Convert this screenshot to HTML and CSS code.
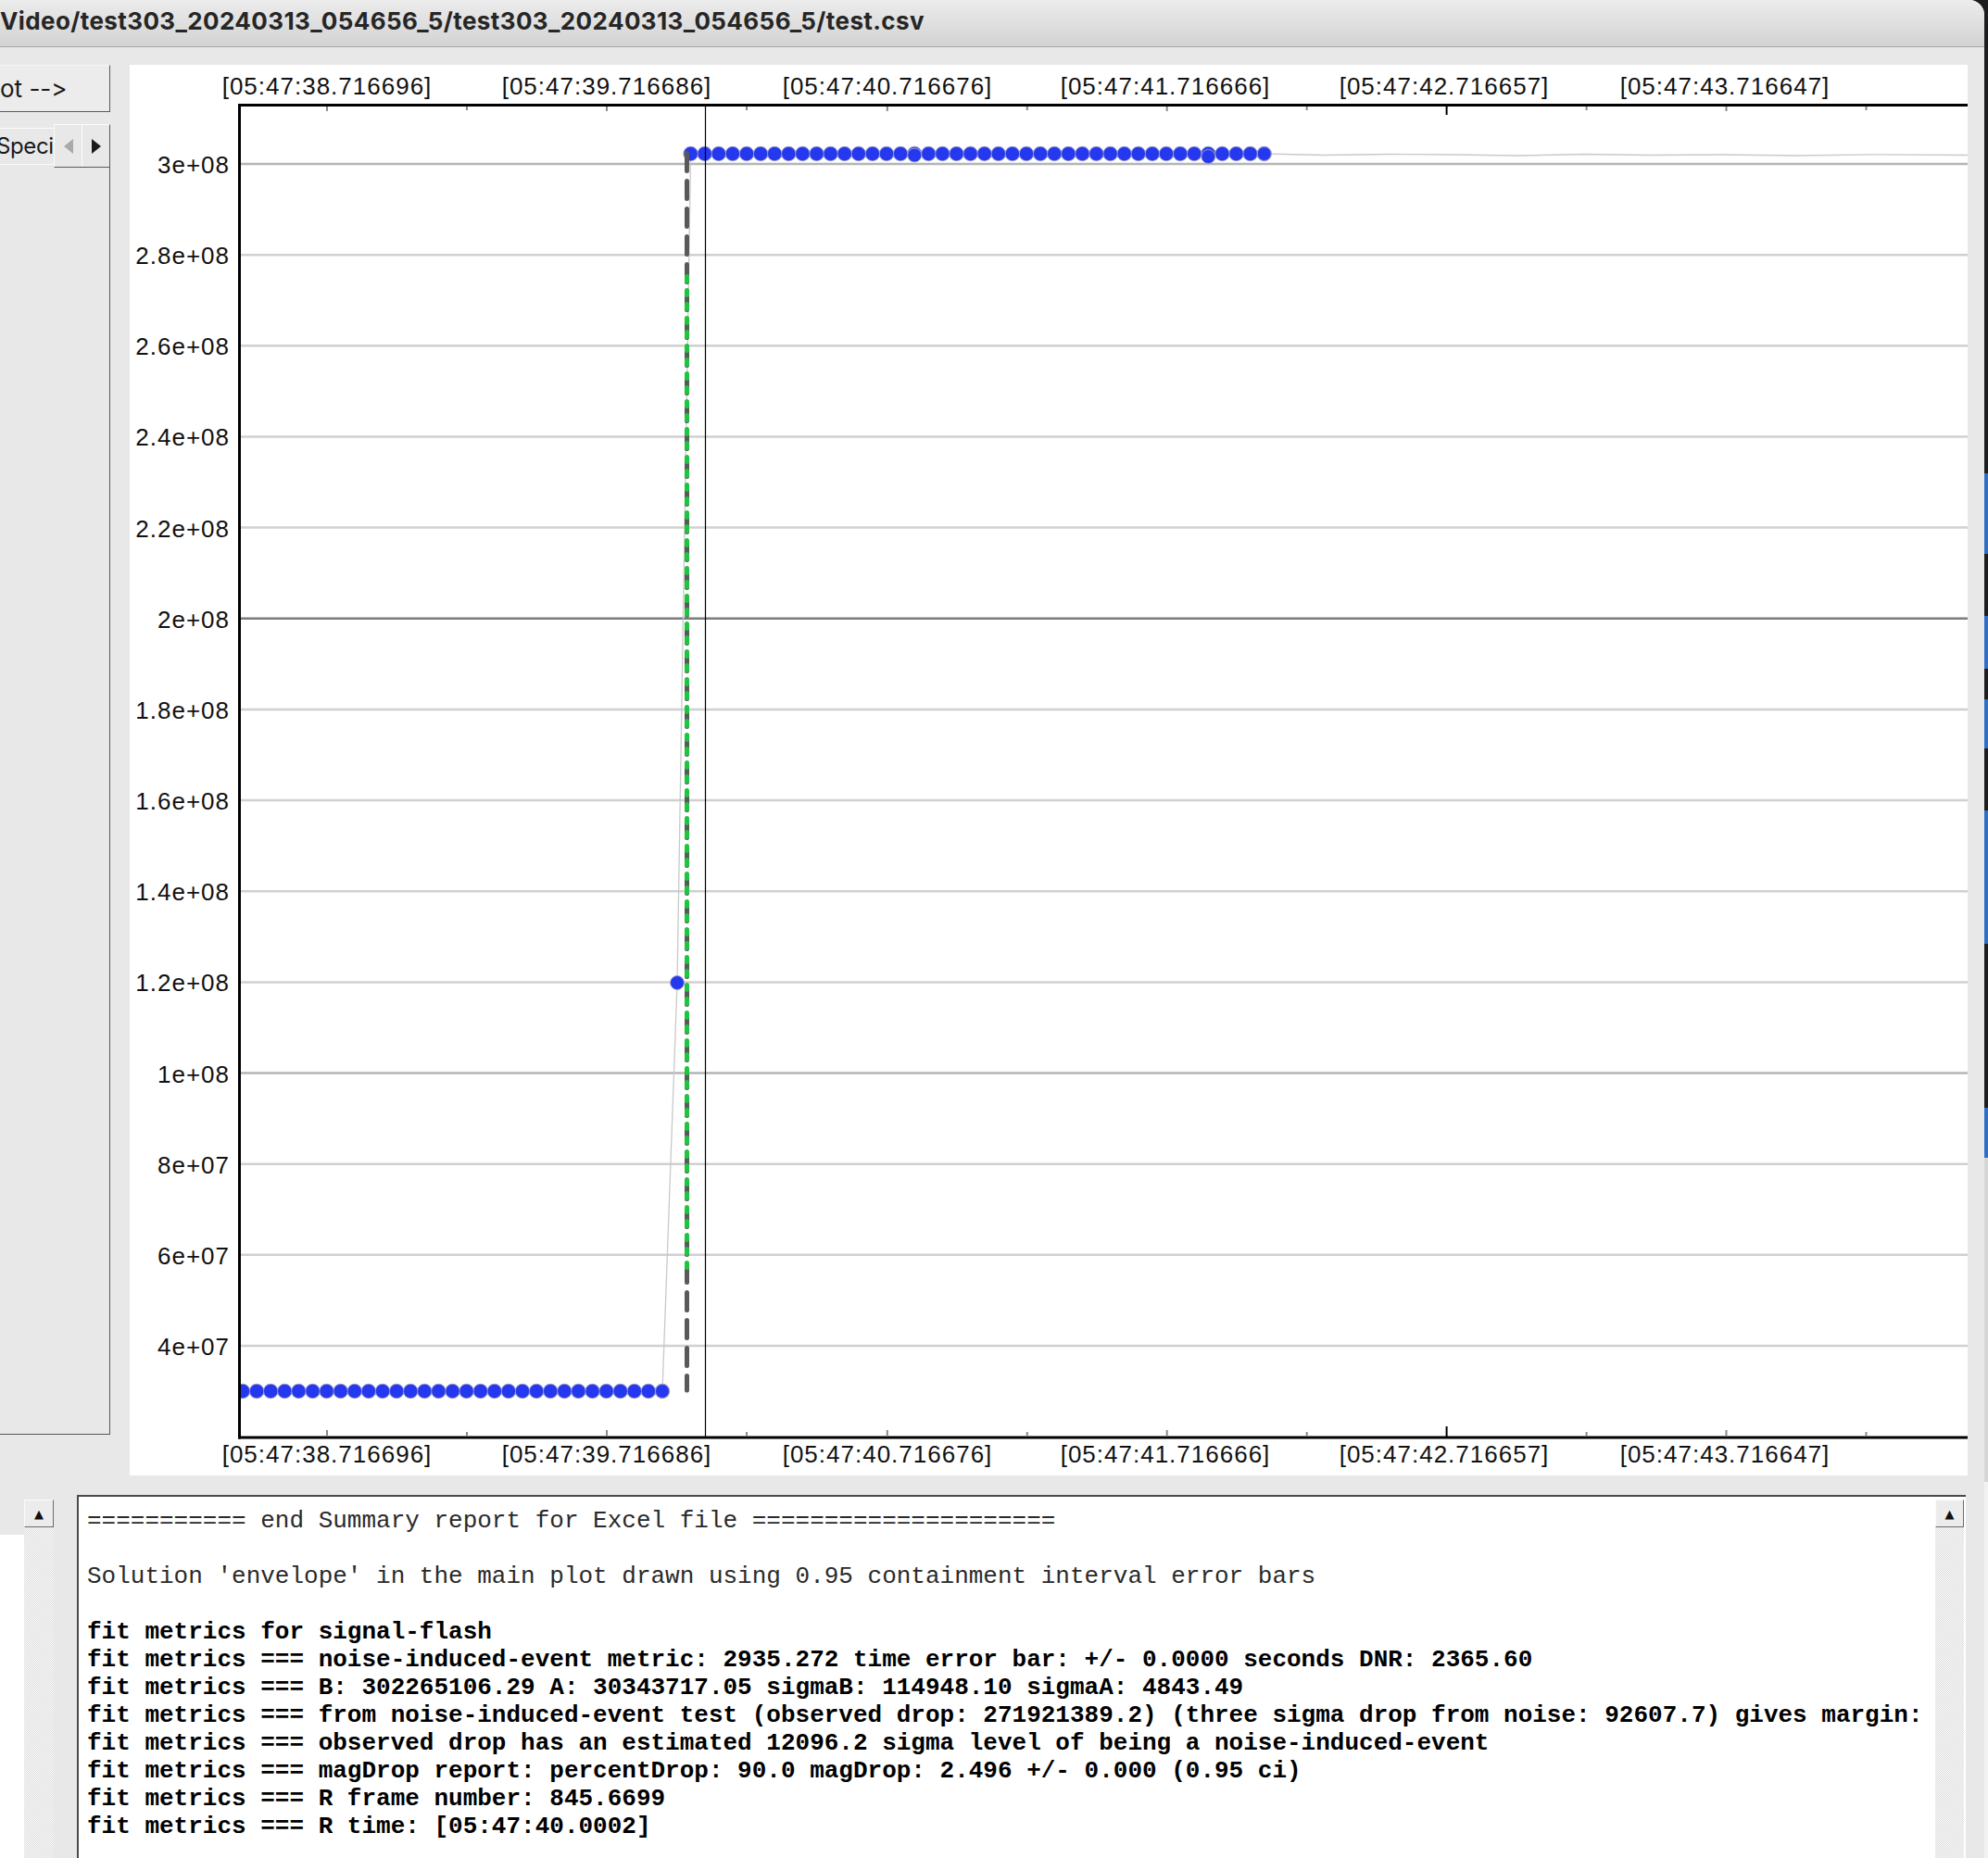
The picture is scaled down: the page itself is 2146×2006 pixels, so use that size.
FILE: index.html
```html
<!DOCTYPE html>
<html>
<head>
<meta charset="utf-8">
<title>test.csv</title>
<link rel="stylesheet" href="styles.css">
</head>
<body>
<div class="window">
  <div class="titlebar"><div class="title">Video/test303_20240313_054656_5/test303_20240313_054656_5/test.csv</div></div>
  <div class="workspace">
    <div class="left-panel">
      <div class="plot-btn">ot --&gt;</div>
      <div class="tab-row">
        <div class="tab-label"><span class="tab-text">Speci</span></div>
        <div class="tab-arrows">
          <div class="arrow-btn"><svg width="10" height="16" viewBox="0 0 10 16"><polygon points="10,0 0,8 10,16" class="arr-off"/></svg></div>
          <div class="arrow-btn"><svg width="10" height="16" viewBox="0 0 10 16"><polygon points="0,0 10,8 0,16" class="arr-on"/></svg></div>
        </div>
      </div>
      <div class="panel-body"></div>
    </div>
    <div class="plot">
      <svg class="chart" width="1984" height="1523" viewBox="0 0 1984 1523">
        <defs><clipPath id="pa"><rect x="120" y="45" width="1864" height="1436"/></clipPath></defs>
        <g class="grid">
          <line class="gl gl-mid" x1="120" y1="107" x2="1984" y2="107"/>
          <line class="gl" x1="120" y1="205.2" x2="1984" y2="205.2"/>
          <line class="gl" x1="120" y1="303.3" x2="1984" y2="303.3"/>
          <line class="gl" x1="120" y1="401.5" x2="1984" y2="401.5"/>
          <line class="gl" x1="120" y1="499.6" x2="1984" y2="499.6"/>
          <line class="gl gl-dark" x1="120" y1="597.8" x2="1984" y2="597.8"/>
          <line class="gl" x1="120" y1="695.9" x2="1984" y2="695.9"/>
          <line class="gl" x1="120" y1="794.1" x2="1984" y2="794.1"/>
          <line class="gl" x1="120" y1="892.2" x2="1984" y2="892.2"/>
          <line class="gl" x1="120" y1="990.4" x2="1984" y2="990.4"/>
          <line class="gl gl-mid" x1="120" y1="1088.5" x2="1984" y2="1088.5"/>
          <line class="gl" x1="120" y1="1186.7" x2="1984" y2="1186.7"/>
          <line class="gl" x1="120" y1="1284.8" x2="1984" y2="1284.8"/>
          <line class="gl" x1="120" y1="1383" x2="1984" y2="1383"/>
        </g>
        <g clip-path="url(#pa)">
          <polyline class="dataline" points="122,1432 575,1432 591,991 605.6,96 1224.7,96 1290,97.5 1360,96.5 1430,97 1500,98 1570,96.5 1640,97.5 1720,97 1800,98 1880,96.8 1984,97.5"/>
          <line class="dash-gray" x1="601.5" y1="95.5" x2="601.5" y2="1431"/>
          <line class="dash-green" x1="601.5" y1="228.5" x2="601.5" y2="1303"/>
          <line class="dots-halo" x1="122" y1="1432" x2="575.6" y2="1432"/>
          <line class="dots" x1="122" y1="1432" x2="575.6" y2="1432"/>
          <circle class="dot" cx="575" cy="1432" r="7.5"/>
          <circle class="dot" cx="591" cy="991" r="7.5"/>
          <line class="dots-halo" x1="605.6" y1="96" x2="1225.3" y2="96"/>
          <line class="dots" x1="605.6" y1="96" x2="1225.3" y2="96"/>
          <circle class="dot" cx="1224.7" cy="96" r="7.5"/>
          <circle class="dot" cx="847.2" cy="97.5" r="7.5"/>
          <circle class="dot" cx="1164.3" cy="99" r="7.5"/>
          <line class="dash-gray-top" x1="601.5" y1="95.5" x2="601.5" y2="112"/>
          <line class="vline" x1="621.5" y1="45" x2="621.5" y2="1481"/>
        </g>
        <g class="axes">
          <line x1="118.5" y1="42" x2="118.5" y2="1483.5"/>
          <line x1="117" y1="43.5" x2="1984" y2="43.5"/>
          <line x1="117" y1="1482" x2="1984" y2="1482"/>
        </g>
        <g class="ticks">
          <line x1="213" y1="45" x2="213" y2="50"/>
          <line x1="364" y1="45" x2="364" y2="49"/>
          <line x1="515" y1="45" x2="515" y2="50"/>
          <line x1="666" y1="45" x2="666" y2="49"/>
          <line x1="817.8" y1="45" x2="817.8" y2="50"/>
          <line x1="968.8" y1="45" x2="968.8" y2="49"/>
          <line x1="1119.7" y1="45" x2="1119.7" y2="50"/>
          <line x1="1270.7" y1="45" x2="1270.7" y2="49"/>
          <line x1="1572.6" y1="45" x2="1572.6" y2="49"/>
          <line x1="1723.5" y1="45" x2="1723.5" y2="50"/>
          <line x1="1874.5" y1="45" x2="1874.5" y2="49"/>
          <line x1="213" y1="1474" x2="213" y2="1481"/>
          <line x1="364" y1="1476" x2="364" y2="1481"/>
          <line x1="515" y1="1474" x2="515" y2="1481"/>
          <line x1="666" y1="1476" x2="666" y2="1481"/>
          <line x1="817.8" y1="1474" x2="817.8" y2="1481"/>
          <line x1="968.8" y1="1476" x2="968.8" y2="1481"/>
          <line x1="1119.7" y1="1474" x2="1119.7" y2="1481"/>
          <line x1="1270.7" y1="1476" x2="1270.7" y2="1481"/>
          <line x1="1572.6" y1="1476" x2="1572.6" y2="1481"/>
          <line x1="1723.5" y1="1474" x2="1723.5" y2="1481"/>
          <line x1="1874.5" y1="1476" x2="1874.5" y2="1481"/>
        </g>
        <g class="ticks-major">
          <line x1="1421.6" y1="45" x2="1421.6" y2="54"/>
          <line x1="1421.6" y1="1470" x2="1421.6" y2="1481"/>
        </g>
        <g class="xlabels">
          <text x="213" y="32">[05:47:38.716696]</text>
          <text x="515" y="32">[05:47:39.716686]</text>
          <text x="818" y="32">[05:47:40.716676]</text>
          <text x="1118" y="32">[05:47:41.716666]</text>
          <text x="1419" y="32">[05:47:42.716657]</text>
          <text x="1722" y="32">[05:47:43.716647]</text>
          <text x="213" y="1509">[05:47:38.716696]</text>
          <text x="515" y="1509">[05:47:39.716686]</text>
          <text x="818" y="1509">[05:47:40.716676]</text>
          <text x="1118" y="1509">[05:47:41.716666]</text>
          <text x="1419" y="1509">[05:47:42.716657]</text>
          <text x="1722" y="1509">[05:47:43.716647]</text>
        </g>
        <g class="ylabels">
          <text x="108" y="117">3e+08</text>
          <text x="108" y="215">2.8e+08</text>
          <text x="108" y="313">2.6e+08</text>
          <text x="108" y="411">2.4e+08</text>
          <text x="108" y="510">2.2e+08</text>
          <text x="108" y="608">2e+08</text>
          <text x="108" y="706">1.8e+08</text>
          <text x="108" y="804">1.6e+08</text>
          <text x="108" y="902">1.4e+08</text>
          <text x="108" y="1000">1.2e+08</text>
          <text x="108" y="1099">1e+08</text>
          <text x="108" y="1197">8e+07</text>
          <text x="108" y="1295">6e+07</text>
          <text x="108" y="1393">4e+07</text>
        </g>
      </svg>
    </div>
  </div>
  <div class="console-row">
    <div class="left-scroll">
      <div class="ls-edge"></div>
      <div class="ls-bar">
        <div class="sb-btn"><span class="sb-arrow">&#9650;</span></div>
        <div class="sb-track"></div>
      </div>
      <div class="ls-gap"></div>
    </div>
    <div class="console">
<pre class="console-text">=========== end Summary report for Excel file =====================

Solution 'envelope' in the main plot drawn using 0.95 containment interval error bars

<b>fit metrics for signal-flash</b>
<b>fit metrics === noise-induced-event metric: 2935.272 time error bar: +/- 0.0000 seconds DNR: 2365.60</b>
<b>fit metrics === B: 302265106.29 A: 30343717.05 sigmaB: 114948.10 sigmaA: 4843.49</b>
<b>fit metrics === from noise-induced-event test (observed drop: 271921389.2) (three sigma drop from noise: 92607.7) gives margin:</b>
<b>fit metrics === observed drop has an estimated 12096.2 sigma level of being a noise-induced-event</b>
<b>fit metrics === magDrop report: percentDrop: 90.0 magDrop: 2.496 +/- 0.000 (0.95 ci)</b>
<b>fit metrics === R frame number: 845.6699</b>
<b>fit metrics === R time: [05:47:40.0002]</b></pre>
      <div class="vscroll">
        <div class="sb-btn"><span class="sb-arrow">&#9650;</span></div>
        <div class="sb-track"></div>
      </div>
    </div>
  </div>
</div>
<div class="desk"></div>
</body>
</html>
```
FILE: styles.css
```css
html, body {
  margin: 0;
  padding: 0;
}
body {
  width: 2146px;
  height: 2006px;
  overflow: hidden;
  display: flex;
  background: #1d1d1f;
  font-family: "Inter", "Liberation Sans", sans-serif;
  font-feature-settings: "calt" 0, "liga" 0;
}
.window {
  width: 2142px;
  height: 2006px;
  flex: none;
  display: flex;
  flex-direction: column;
  background: #e8e8e8;
  border-top-right-radius: 16px;
  overflow: hidden;
}
.titlebar {
  height: 50px;
  flex: none;
  border-bottom: 1px solid #a8a8a8;
  background: linear-gradient(#ececec, #d3d3d3);
  display: flex;
  align-items: flex-start;
  overflow: hidden;
}
.title {
  margin: 7px 0 0 0;
  font: 700 26px/32px "Inter", "Liberation Sans", sans-serif;
  letter-spacing: 0.4px;
  color: #262626;
  white-space: nowrap;
}
.workspace {
  display: flex;
  flex: none;
  height: 1523px;
  padding-top: 19px;
}
.left-panel {
  width: 119px;
  flex: none;
  display: flex;
  flex-direction: column;
}
.plot-btn {
  height: 51px;
  flex: none;
  box-sizing: border-box;
  border-top: 1px solid #f7f7f7;
  border-right: 1px solid #5a5a5a;
  border-bottom: 1px solid #5a5a5a;
  background: #ececec;
  font: 400 26px/49px "Inter", "Liberation Sans", sans-serif;
  font-feature-settings: "calt" 0, "liga" 0;
  font-variant-ligatures: none;
  color: #1a1a1a;
  white-space: nowrap;
  overflow: hidden;
}
.tab-row {
  margin-top: 13px;
  height: 47px;
  flex: none;
  display: flex;
}
.tab-label {
  width: 58px;
  flex: none;
  margin: 4px 0 3px;
  box-sizing: border-box;
  border-top: 1px solid #fbfbfb;
  border-bottom: 1px solid #fbfbfb;
  overflow: hidden;
  white-space: nowrap;
  font: 400 24px/38px "Inter", "Liberation Sans", sans-serif;
  letter-spacing: -0.4px;
  color: #1a1a1a;
}
.tab-text {
  display: inline-block;
  margin-left: -4px;
}
.tab-arrows {
  width: 61px;
  flex: none;
  display: flex;
  box-sizing: border-box;
  border-top: 1px solid #fbfbfb;
  border-left: 1px solid #fbfbfb;
  border-right: 1px solid #5a5a5a;
  border-bottom: 1px solid #5a5a5a;
}
.arrow-btn {
  flex: 1;
  display: flex;
  align-items: center;
  justify-content: center;
}
.arrow-btn + .arrow-btn {
  border-left: 1px solid #fbfbfb;
}
.arr-off { fill: #a9a9a9; }
.arr-on { fill: #1a1a1a; }
.panel-body {
  height: 1368px;
  flex: none;
  box-sizing: border-box;
  border-right: 1px solid #5a5a5a;
  border-bottom: 1px solid #5a5a5a;
}
.plot {
  width: 1984px;
  height: 1523px;
  margin-left: 21px;
  flex: none;
  background: #fff;
}
.chart {
  display: block;
}
.gl { stroke: #d0d0d0; stroke-width: 2.5; }
.gl-mid { stroke: #b4b4b4; stroke-width: 2.7; }
.gl-dark { stroke: #7c7c7c; }
.dataline { fill: none; stroke: #c9c9c9; stroke-width: 1.3; }
.dash-gray, .dash-gray-top {
  stroke: #595959;
  stroke-width: 5;
  stroke-linecap: round;
  stroke-dasharray: 19 11;
}
.dash-green {
  stroke: #1fc43f;
  stroke-width: 5;
  stroke-linecap: round;
  stroke-dasharray: 5 10;
}
.dots-halo {
  stroke: #9da0c8;
  stroke-width: 16.5;
  stroke-linecap: round;
  stroke-dasharray: 0 15.1;
}
.dots {
  stroke: #2537ef;
  stroke-width: 14.5;
  stroke-linecap: round;
  stroke-dasharray: 0 15.1;
}
.dot {
  fill: #2537ef;
  stroke: #9da0c8;
  stroke-width: 1;
}
.vline { stroke: #000; stroke-width: 1.2; }
.axes line { stroke: #000; stroke-width: 3; }
.ticks line { stroke: #8a8a8a; stroke-width: 2; }
.ticks-major line { stroke: #000; stroke-width: 2; }
.xlabels text, .ylabels text {
  font-family: "Liberation Sans", Arial, sans-serif;
  font-size: 26px;
  letter-spacing: 1px;
  fill: #111;
}
.xlabels text { text-anchor: middle; }
.ylabels text { text-anchor: end; }
.console-row {
  display: flex;
  flex: 1;
  margin-top: 21px;
  min-height: 0;
}
.left-scroll {
  width: 83px;
  flex: none;
  display: flex;
}
.ls-edge {
  width: 26px;
  flex: none;
  background: linear-gradient(#e8e8e8 0 43px, #ffffff 43px);
}
.ls-bar {
  width: 32px;
  flex: none;
  display: flex;
  flex-direction: column;
  padding-top: 5px;
}
.ls-gap {
  flex: 1;
}
.sb-btn {
  height: 30px;
  flex: none;
  box-sizing: border-box;
  border: 1px solid;
  border-color: #fafafa #6b6b6b #6b6b6b #fafafa;
  background: #ececec;
  display: flex;
  align-items: center;
  justify-content: center;
}
.sb-arrow {
  font: 13px/1 "DejaVu Sans", sans-serif;
  color: #111;
}
.sb-track {
  flex: 1;
  background: repeating-conic-gradient(#dcdcdc 0 25%, #fbfbfb 0 50%) 0 0 / 2px 2px;
}
.console {
  width: 2039px;
  flex: none;
  box-sizing: border-box;
  border-top: 2px solid #4a4a4a;
  border-left: 2px solid #4a4a4a;
  background: #fff;
  display: flex;
}
.console-text {
  flex: 1;
  margin: 0;
  padding: 11px 0 0 9px;
  font: 400 26px/30px "Liberation Mono", "Courier New", monospace;
  color: #2a2a2a;
  white-space: pre;
  overflow: hidden;
}
.console-text b {
  font-weight: 700;
  color: #000;
}
.vscroll {
  width: 31px;
  flex: none;
  margin-right: 2px;
  padding-top: 3px;
  display: flex;
  flex-direction: column;
}
.desk {
  width: 4px;
  flex: none;
  background: linear-gradient(#1d1d1f 0 511px, #2f6ec7 511px 598px, #1d1d1f 598px 665px, #2f6ec7 665px 722px, #1d1d1f 722px 755px, #2f6ec7 755px 808px, #1d1d1f 808px 875px, #2f6ec7 875px 1019px, #1d1d1f 1019px 1196px, #2f6ec7 1196px 1250px, #d6d6d6 1250px 1600px, #f2f2f2 1600px);
}
```
